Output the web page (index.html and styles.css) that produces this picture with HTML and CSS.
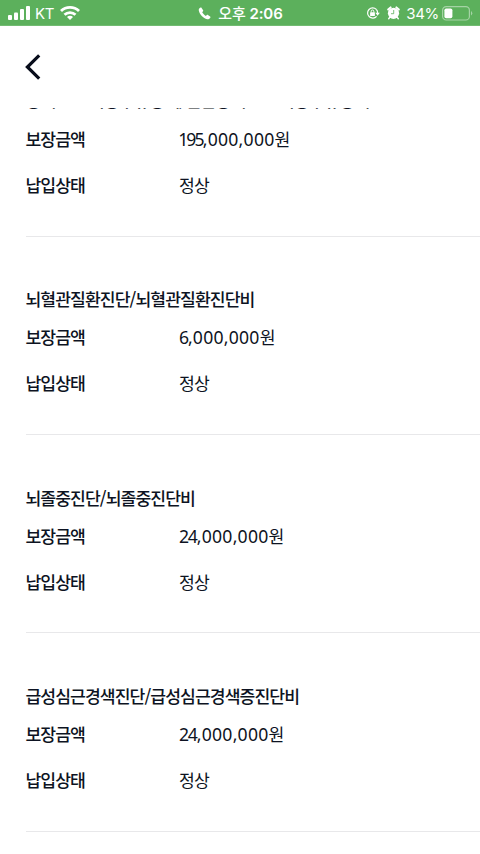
FILE: index.html
```html
<!DOCTYPE html>
<html lang="ko">
<head>
    <meta charset="UTF-8">
    <meta name="viewport" content="width=device-width, initial-scale=1.0">
    <title>보장내역</title>
    <link rel="stylesheet" href="styles.css">
</head>
<body>
    <div class="status-bar">
        <div class="status-left">
            <svg class="signal" width="22" height="14" viewBox="0 0 22 14" fill="#fff">
                <rect x="0" y="9" width="4" height="5" rx="1"/>
                <rect x="6" y="6.5" width="4" height="7.5" rx="1"/>
                <rect x="12" y="3" width="4" height="11" rx="1"/>
                <rect x="18" y="0" width="4" height="14" rx="1"/>
            </svg>
            <span class="carrier">KT</span>
            <svg class="wifi" width="20" height="14" viewBox="0 0 20 14" fill="none" stroke="#fff" stroke-width="2.8">
                <path d="M1 5.1a12.8 12.8 0 0 1 18 0"/>
                <path d="M4.500 8.800a7.800 7.800 0 0 1 11 0"/>
                <path d="M10 14l-3-3a4.200 4.200 0 0 1 6 0z" fill="#fff" stroke="none"/>
            </svg>
        </div>
        <div class="status-center">
            <svg width="13" height="13" viewBox="0 0 13 13" fill="#fff">
                <path d="M2.6.6C1.3 1 .5 2.2.8 3.6c.8 3.9 4.4 7.8 8.3 8.7 1.4.3 2.7-.5 3.3-1.7.2-.5.1-.8-.3-1.1L9.9 8c-.4-.3-.8-.2-1.1.1l-.9.8C6.4 8.1 5 6.6 4.2 5.2l.8-.9c.3-.3.4-.7.1-1.1L3.6.9C3.4.6 3 .5 2.6.6z"/>
            </svg>
            <span class="time"><span class="ampm">오후</span> 2:06</span>
        </div>
        <div class="status-right">
            <svg class="lock" width="14" height="12" viewBox="0 0 14 12">
                <path d="M10.3 2.4A5.1 5.1 0 1 0 10.6 9.3" fill="none" stroke="#fff" stroke-width="1.2"/>
                <path d="M10.3 2.4a5.1 5.1 0 0 1 1.3 3.6" fill="none" stroke="#fff" stroke-width="1.2"/>
                <path d="M9.4 5.7h4.4l-2.2 3z" fill="#fff"/>
                <rect x="4.1" y="5.3" width="4.8" height="3.7" rx=".5" fill="#fff"/>
                <path d="M5.2 5.5V4.3a1.3 1.3 0 0 1 2.6 0v1.2" fill="none" stroke="#fff"/>
            </svg>
            <svg class="alarm" width="13" height="14" viewBox="0 0 13 14">
                <circle cx="6.5" cy="7.3" r="5.6" fill="#fff"/>
                <path d="M1.2 3.6L3.6 1.4M11.8 3.6L9.4 1.4" stroke="#fff" stroke-width="2" stroke-linecap="round"/>
                <path d="M2.8 11.3l-1.1 1.4M10.2 11.3l1.1 1.4" stroke="#fff" stroke-width="1.4" stroke-linecap="round"/>
                <path d="M6.7 4v3.7H4" fill="none" stroke="#5cb05c" stroke-width=".8"/>
            </svg>
            <span class="percent">34%</span>
            <svg class="battery" width="31" height="15" viewBox="0 0 31 15">
                <rect x=".6" y=".6" width="26.8" height="13.4" rx="3.6" fill="none" stroke="#a5d3a5" stroke-width="1.2"/>
                <rect x="2.4" y="2.4" width="8" height="9.8" rx="1.8" fill="#fff"/>
                <path d="M29 5a2.7 2.7 0 0 1 0 4.6z" fill="#a5d3a5"/>
            </svg>
        </div>
    </div>

    <div class="header">
        <svg width="16" height="26" viewBox="0 0 16 26" fill="none" stroke="#080d1b" stroke-width="3.2">
            <path d="M14.2 1.4L2.4 13l11.8 11.6"/>
        </svg>
    </div>

    <div class="content">
        <div class="list">
            <div class="item">
                <div class="title first">상해80%이상후유장해/일반상해80%이상후유장해</div>
                <div class="row"><span class="label">보장금액</span><span class="value"><span class="num"><span class="lead narrow">195</span>,000,000</span>원</span></div>
                <div class="row"><span class="label">납입상태</span><span class="value">정상</span></div>
            </div>
            <div class="item">
                <div class="title">뇌혈관질환진단/뇌혈관질환진단비</div>
                <div class="row"><span class="label">보장금액</span><span class="value"><span class="num"><span class="lead">6</span>,000,000</span>원</span></div>
                <div class="row"><span class="label">납입상태</span><span class="value">정상</span></div>
            </div>
            <div class="item">
                <div class="title">뇌졸중진단/뇌졸중진단비</div>
                <div class="row"><span class="label">보장금액</span><span class="value"><span class="num"><span class="lead">24</span>,000,000</span>원</span></div>
                <div class="row"><span class="label">납입상태</span><span class="value">정상</span></div>
            </div>
            <div class="item">
                <div class="title">급성심근경색진단/급성심근경색증진단비</div>
                <div class="row"><span class="label">보장금액</span><span class="value"><span class="num"><span class="lead">24</span>,000,000</span>원</span></div>
                <div class="row"><span class="label">납입상태</span><span class="value">정상</span></div>
            </div>
        </div>
    </div>
</body>
</html>
```
FILE: styles.css
```css
* {
    box-sizing: border-box;
}
body {
    margin: 0;
    height: 854px;
    display: flex;
    flex-direction: column;
    overflow: hidden;
    background: #fff;
    color: #0d1322;
    font-family: "Noto Sans CJK KR", sans-serif;
}
svg {
    display: block;
    flex: none;
}
.status-bar {
    flex: none;
    height: 26px;
    padding: 0 7px 0 8px;
    display: grid;
    grid-template-columns: 1fr auto 1fr;
    align-items: center;
    background: #5cb05c;
    border-bottom: 1px solid #72bb72;
    color: #fff;
    font-family: Inter, "Noto Sans CJK KR", sans-serif;
    font-size: 15px;
    line-height: 25px;
}
.status-left, .status-center, .status-right {
    display: flex;
    align-items: center;
}
.carrier {
    margin: 1px 6px 0 5px;
    letter-spacing: -0.3px;
}
.status-center {
    gap: 7px;
}
.time {
    font-weight: 600;
    letter-spacing: -0.1px;
}
.ampm {
    font-weight: 500;
}
.status-right {
    justify-content: flex-end;
}
.alarm {
    margin: 0 6px 0 7px;
}
.percent {
    letter-spacing: -0.3px;
    margin-right: 3px;
}
.header {
    flex: none;
    height: 81.5px;
    padding: 28px 25px 0;
}
.content {
    flex: 1;
    overflow: hidden;
    padding-left: 26px;
}
.list {
    margin-top: -69.2px;
}
.item {
    height: 198.4px;
    padding-top: 47.5px;
    border-bottom: 1px solid #e8e8ea;
    font-size: 17.2px;
    letter-spacing: -0.93px;
}
.title, .label {
    margin-left: -0.6px;
}
.title {
    height: 30px;
    line-height: 30px;
    font-weight: 500;
}
.first {
    line-height: 27px;
    letter-spacing: -0.76px;
}
.row {
    display: flex;
    height: 46px;
    line-height: 46px;
}
.label {
    width: 153.6px;
    font-weight: 500;
}
.num {
    font-family: "Noto Sans", sans-serif;
    font-size: 17.6px;
    letter-spacing: 0.25px;
}
.lead {
    letter-spacing: -1.2px;
}
.narrow {
    margin-left: -0.8px;
    letter-spacing: -1.9px;
}
```
